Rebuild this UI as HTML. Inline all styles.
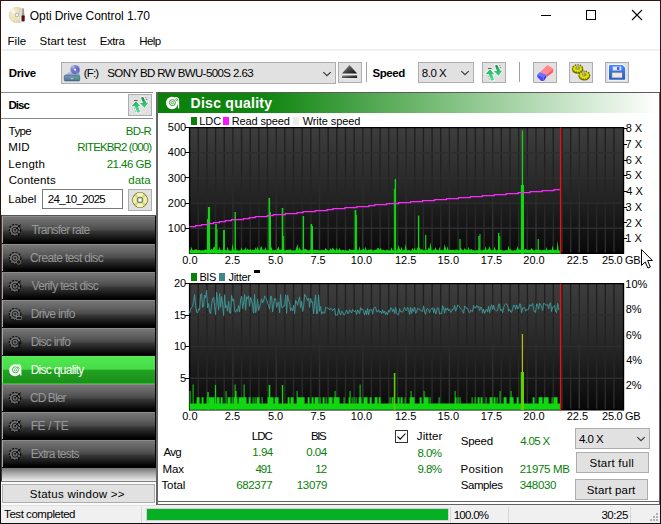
<!DOCTYPE html>
<html><head><meta charset="utf-8">
<style>
*{box-sizing:border-box;margin:0;padding:0}
html,body{width:661px;height:524px;overflow:hidden;background:#fff}
body{position:relative;font-family:"Liberation Sans",sans-serif;font-size:12px;color:#000}
.a{position:absolute}
.t{position:absolute;white-space:nowrap;line-height:16px}
.ax{position:absolute;white-space:nowrap;font-size:11px;line-height:12px;color:#000}
.tk{position:absolute;height:1px;background:#000}
.btn{position:absolute;background:#e1e1e1;border:1px solid #adadad}
.nav{position:absolute;left:2px;width:153px;height:27px;background:linear-gradient(#767676 0%,#606060 28%,#4a4a4a 49%,#363636 56%,#1c1c1c 76%,#070707 92%,#000 100%);border-left:1px solid #a8a8a8;border-top:1px solid #8c8c8c}
.nav.on{height:28px;border-bottom:1px solid #2cbc2c;background:linear-gradient(#50e650 0%,#46de46 46%,#22a222 52%,#1b8e1b 100%);border-left:1px solid #7cf07c;border-top:1px solid #58e858}
</style></head><body>
<!-- window frame -->
<div class="a" style="left:0;top:0;width:661px;height:1px;background:#33170f;z-index:50"></div>
<div class="a" style="left:0;top:523px;width:661px;height:1px;background:#101010;z-index:50"></div>
<div class="a" style="left:0;top:0;width:1px;height:524px;background:linear-gradient(#33170f,#2a1510 40%,#101010 80%);z-index:50"></div>
<div class="a" style="left:660px;top:0;width:1px;height:524px;background:linear-gradient(#33170f,#2a1510 40%,#101010 80%);z-index:50"></div>

<!-- title bar -->
<svg class="a" style="left:8px;top:6px" width="18" height="18" viewBox="0 0 18 18">
<defs><radialGradient id="dg" cx="0.4" cy="0.45" r="0.6"><stop offset="0" stop-color="#f8f4dc"/><stop offset="1" stop-color="#e0d6a0"/></radialGradient></defs>
<circle cx="8.9" cy="9" r="7.8" fill="url(#dg)" stroke="#d6cd9c" stroke-width="0.5"/>
<path d="M8.9 9 L1.8 5.4 A7.8 7.8 0 0 1 5.6 2Z" fill="#fbf8e8" opacity="0.9"/>
<path d="M8.9 9 L16 12.6 A7.8 7.8 0 0 1 12.2 16Z" fill="#fbf8e8" opacity="0.9"/>
<path d="M8.9 9 L4.4 15.4 A7.8 7.8 0 0 1 2 12.8Z" fill="#ece3b6"/>
<path d="M8.9 9 L13.4 2.6 A7.8 7.8 0 0 1 15.8 5.2Z" fill="#ece3b6"/>
<circle cx="8.9" cy="9" r="2.4" fill="#c0c0c0"/><circle cx="8.9" cy="9" r="1.1" fill="#fff"/>
<path d="M11.7 2.2 L12.8 2 L13.3 16.4 L11.5 16.6Z" fill="#f2f2f2" stroke="#b4b4b4" stroke-width="0.45"/>
<rect x="14.3" y="2.4" width="1.5" height="7" fill="#8c8c8c"/>
<rect x="13.6" y="9.2" width="3.1" height="6.4" rx="1" fill="#581010"/>
</svg>
<div class="a" style="left:541px;top:15px;width:10px;height:1px;background:#000"></div>
<div class="a" style="left:586px;top:10px;width:10px;height:10px;border:1px solid #000"></div>
<svg class="a" style="left:631px;top:9px" width="12" height="12" viewBox="0 0 12 12"><path d="M1 1 L11 11 M11 1 L1 11" stroke="#000" stroke-width="1.1" fill="none"/></svg>

<!-- menu separator -->
<div class="a" style="left:1px;top:49px;width:659px;height:2px;background:#f0f0f0"></div>

<!-- toolbar -->
<div class="btn" style="left:61px;top:62px;width:275px;height:22px"></div>
<svg class="a" style="left:63px;top:63px" width="19" height="20" viewBox="0 0 19 20">
<defs><linearGradient id="dv" x1="0" y1="0" x2="0" y2="1"><stop offset="0" stop-color="#7f9dbd"/><stop offset="1" stop-color="#4f7196"/></linearGradient>
<linearGradient id="dd" x1="0" y1="0" x2="1" y2="1"><stop offset="0" stop-color="#8c94d8"/><stop offset="1" stop-color="#4c56ae"/></linearGradient></defs>
<path d="M5.5 9.6 L16.5 9.6 L16.5 12.4 L1.3 12.4Z" fill="#9db4cc"/>
<circle cx="12.1" cy="6.8" r="4.9" fill="url(#dd)" stroke="#c8ccec" stroke-width="0.5"/>
<path d="M12.1 6.8 L8.2 4.5 A4.9 4.9 0 0 1 11 2.1Z" fill="#b0b6ea" opacity="0.8"/>
<path d="M12.1 6.8 L16 9.2 A4.9 4.9 0 0 1 13.2 11.6Z" fill="#8088d0" opacity="0.8"/>
<circle cx="12.1" cy="6.8" r="1" fill="#fff"/>
<rect x="1.3" y="12.3" width="15.4" height="5.6" rx="1" fill="url(#dv)" stroke="#3e5e82" stroke-width="0.7"/>
<rect x="12.6" y="13.7" width="2.4" height="2.4" fill="#1fc43a"/>
<rect x="7.6" y="15.2" width="2.8" height="0.9" fill="#c8d4e4"/>
</svg>
<svg class="a" style="left:322px;top:71px" width="10" height="6" viewBox="0 0 10 6"><path d="M1.3 1.1 L5 4.7 L8.7 1.1" stroke="#3c3c3c" stroke-width="1.25" fill="none"/></svg>
<div class="btn" style="left:338px;top:62px;width:24px;height:21px"></div>
<svg class="a" style="left:340px;top:63px" width="20" height="19" viewBox="0 0 20 19">
<defs><linearGradient id="ej" x1="0" y1="0" x2="1" y2="1"><stop offset="0" stop-color="#9a9a9a"/><stop offset="0.5" stop-color="#4a4a4a"/><stop offset="1" stop-color="#080808"/></linearGradient></defs>
<path d="M2 11.6 L17.1 11.6 L17.1 16.1 L2 16.1Z" fill="#fff"/>
<path d="M9.5 1.9 L17.1 10.6 L2 10.6Z" fill="url(#ej)"/>
<rect x="2" y="12.3" width="15.1" height="2.8" fill="url(#ej)"/>
</svg>
<div class="a" style="left:366px;top:62px;width:1px;height:20px;background:#a0a0a0"></div>
<div class="btn" style="left:418px;top:62px;width:56px;height:21px"></div>
<svg class="a" style="left:460px;top:70px" width="10" height="6" viewBox="0 0 10 6"><path d="M1.3 1.1 L5 4.7 L8.7 1.1" stroke="#3c3c3c" stroke-width="1.25" fill="none"/></svg>
<div class="btn" style="left:482px;top:62px;width:24px;height:21px"></div>
<svg class="a" style="left:482px;top:62px" width="24" height="22" viewBox="0 0 24 22">
<defs><linearGradient id="rua" x1="0" y1="0" x2="0.4" y2="1"><stop offset="0" stop-color="#1ea658"/><stop offset="1" stop-color="#4ade90"/></linearGradient>
<linearGradient id="rda" x1="0" y1="0" x2="0.3" y2="1"><stop offset="0" stop-color="#176e3e"/><stop offset="0.5" stop-color="#27b264"/><stop offset="1" stop-color="#3ed080"/></linearGradient></defs>
<path d="M8 7.3 L12.5 12.3 L9.9 12.3 L12.3 18 L9.2 18.7 L6.9 12.3 L3.5 12.3Z" fill="#fff" stroke="#fff" stroke-width="1.6" stroke-linejoin="round" opacity="0.9"/>
<path d="M13 3.4 L15.2 3 L18.3 8.8 L20.3 8.6 L16.5 13.9 L12 9 L15 8.9Z" fill="#fff" stroke="#fff" stroke-width="1.6" stroke-linejoin="round" opacity="0.9"/>
<path d="M8 7.3 L12.5 12.3 L9.9 12.3 L12.3 18 L9.2 18.7 L6.9 12.3 L3.5 12.3Z" fill="url(#rua)"/>
<path d="M13 3.4 L15.2 3 L18.3 8.8 L20.3 8.6 L16.5 13.9 L12 9 L15 8.9Z" fill="url(#rda)"/>
<rect x="6" y="6" width="3.6" height="0.9" fill="#333" opacity="0.85"/>
<path d="M17.6 3.4 L18.9 6.2" stroke="#333" stroke-width="0.8" stroke-dasharray="1 0.8" opacity="0.8"/>
<path d="M6.3 13.8 L8 18.6" stroke="#333" stroke-width="0.7" stroke-dasharray="0.9 2.2" opacity="0.7"/>
</svg>
<div class="a" style="left:519px;top:62px;width:1px;height:20px;background:#a0a0a0"></div>
<div class="btn" style="left:533px;top:62px;width:24px;height:21px"></div>
<svg class="a" style="left:528px;top:58px" width="40" height="30" viewBox="0 0 40 30">
<path d="M19.4 6.2 L26 10.4 L25.6 14.6 L18.2 20 L15.8 23.4 L12.8 23.4 L8.6 19 L8.6 16.2 L11.8 13.8Z" fill="#fff" opacity="0.85"/>
<path d="M19.4 6.7 L25.5 10.6 L18.4 16.4 L11.9 13.9Z" fill="#ff8a90"/>
<path d="M25.5 10.6 L25.2 14.2 L18.2 19.6 L18.4 16.4Z" fill="#ff5a62"/>
<path d="M11.9 13.9 L18.4 16.4 L15.6 19.6 L9.2 16.4Z" fill="#7070ff"/>
<path d="M18.4 16.4 L18.2 19.6 L15.8 22.9 L15.6 19.6Z" fill="#3838f0"/>
<path d="M9.2 16.4 L15.6 19.6 L15.8 22.9 L13 22.9 L9.2 18.9Z" fill="#4848ff"/>
</svg>
<div class="btn" style="left:569px;top:62px;width:24px;height:21px"></div>
<svg class="a" style="left:564px;top:58px" width="40" height="30" viewBox="0 0 40 30">
<g>
<ellipse cx="13.6" cy="11.4" rx="5.6" ry="4.3" fill="#6e6e00"/>
<ellipse cx="13.6" cy="10.6" rx="5" ry="3.8" fill="#e4e400" stroke="#6c6c00" stroke-width="1.5" stroke-dasharray="1.3 1.2"/>
<ellipse cx="13.6" cy="10.2" rx="2.6" ry="1.7" fill="#a8a800"/>
<rect x="12.7" y="6.4" width="2" height="5.2" fill="#8c8c8c"/><rect x="13.3" y="6.4" width="0.8" height="5.2" fill="#c4c4c4"/>
<ellipse cx="20.3" cy="18" rx="5.8" ry="4.6" fill="#6e6e00"/>
<ellipse cx="20.3" cy="17.2" rx="5.2" ry="4" fill="#e4e400" stroke="#6c6c00" stroke-width="1.5" stroke-dasharray="1.3 1.2"/>
<ellipse cx="20.3" cy="16.8" rx="2.6" ry="1.8" fill="#a8a800"/>
<rect x="18.7" y="13.2" width="2" height="5.2" fill="#8c8c8c"/><rect x="19.3" y="13.2" width="0.8" height="5.2" fill="#c4c4c4"/>
</g>
</svg>
<div class="btn" style="left:605px;top:62px;width:24px;height:21px"></div>
<svg class="a" style="left:600px;top:58px" width="40" height="30" viewBox="0 0 40 30">
<defs><linearGradient id="fl" x1="0" y1="0" x2="0" y2="1"><stop offset="0" stop-color="#4a86ff"/><stop offset="1" stop-color="#1a5ae8"/></linearGradient></defs>
<path d="M8.3 6.2 H22.8 L26 9.4 V22.6 H8.3Z" fill="#fff"/>
<path d="M9.8 7 H22.4 L25.2 9.8 V21 Q25.2 21.8 24.4 21.8 H9.8 Q9 21.8 9 21 V7.8 Q9 7 9.8 7Z" fill="url(#fl)"/>
<rect x="12.7" y="8.5" width="8.6" height="4" fill="#dfe6fa"/>
<rect x="17" y="9.1" width="2.4" height="2.8" fill="#2a62f0"/>
<rect x="11.8" y="14.2" width="10.6" height="5.8" fill="#e8e8e8" stroke="#6a6a6a" stroke-width="0.8"/>
</svg>
<div class="a" style="left:1px;top:92px;width:152px;height:1px;background:#8a8a8a"></div><div class="a" style="left:156px;top:92px;width:504px;height:1px;background:#5c5c5c"></div>

<!-- left panel -->
<div class="btn" style="left:128px;top:94px;width:24px;height:22px"></div>
<svg class="a" style="left:128px;top:94px" width="24" height="22" viewBox="0 0 24 22">
<defs><linearGradient id="rub" x1="0" y1="0" x2="0.4" y2="1"><stop offset="0" stop-color="#1ea658"/><stop offset="1" stop-color="#4ade90"/></linearGradient>
<linearGradient id="rdb" x1="0" y1="0" x2="0.3" y2="1"><stop offset="0" stop-color="#176e3e"/><stop offset="0.5" stop-color="#27b264"/><stop offset="1" stop-color="#3ed080"/></linearGradient></defs>
<path d="M8 7.3 L12.5 12.3 L9.9 12.3 L12.3 18 L9.2 18.7 L6.9 12.3 L3.5 12.3Z" fill="#fff" stroke="#fff" stroke-width="1.6" stroke-linejoin="round" opacity="0.9"/>
<path d="M13 3.4 L15.2 3 L18.3 8.8 L20.3 8.6 L16.5 13.9 L12 9 L15 8.9Z" fill="#fff" stroke="#fff" stroke-width="1.6" stroke-linejoin="round" opacity="0.9"/>
<path d="M8 7.3 L12.5 12.3 L9.9 12.3 L12.3 18 L9.2 18.7 L6.9 12.3 L3.5 12.3Z" fill="url(#rub)"/>
<path d="M13 3.4 L15.2 3 L18.3 8.8 L20.3 8.6 L16.5 13.9 L12 9 L15 8.9Z" fill="url(#rdb)"/>
<rect x="6" y="6" width="3.6" height="0.9" fill="#333" opacity="0.85"/>
<path d="M17.6 3.4 L18.9 6.2" stroke="#333" stroke-width="0.8" stroke-dasharray="1 0.8" opacity="0.8"/>
<path d="M6.3 13.8 L8 18.6" stroke="#333" stroke-width="0.7" stroke-dasharray="0.9 2.2" opacity="0.7"/>
</svg>
<div class="a" style="left:1px;top:118px;width:152px;height:1px;background:#8a8a8a"></div>
<div class="a" style="left:42px;top:189px;width:81px;height:20px;border:1px solid #7a7a7a;background:#fff"></div>
<div class="btn" style="left:128px;top:189px;width:24px;height:22px"></div>
<svg class="a" style="left:131px;top:191px" width="18" height="18" viewBox="0 0 18 18">
<circle cx="9" cy="9" r="7.5" fill="#e6e68c" stroke="#55552a" stroke-width="0.9"/>
<path d="M9 9 L5.6 2.4 A7.4 7.4 0 0 1 12.4 2.4Z M9 9 L12.4 15.6 A7.4 7.4 0 0 1 5.6 15.6Z" fill="#f8f8c0" opacity="0.9"/>
<path d="M9 9 L2.4 5.6 A7.4 7.4 0 0 0 2.4 12.4Z M9 9 L15.6 12.4 A7.4 7.4 0 0 0 15.6 5.6Z" fill="#f4f4b0" opacity="0.75"/>
<path d="M9 9 L3.2 3.9 A7.4 7.4 0 0 1 4.6 2.9Z M9 9 L14.8 14.1 A7.4 7.4 0 0 1 13.4 15.1Z M9 9 L14.8 3.9 A7.4 7.4 0 0 0 13.4 2.9Z M9 9 L3.2 14.1 A7.4 7.4 0 0 0 4.6 15.1Z" fill="#c8c860" opacity="0.7"/>
<circle cx="9" cy="9" r="2.9" fill="#c4d4c0" stroke="#60604a" stroke-width="0.9"/><circle cx="9" cy="9" r="1.3" fill="#fff"/></svg>

<!-- nav -->
<div class="a" style="left:1px;top:215px;width:155px;height:253px;background:#050505"></div><div class="a" style="left:1px;top:215px;width:155px;height:1px;background:#555"></div>
<div class="nav" style="top:216px"></div><svg class="a" style="left:2px;top:216px" width="30" height="28" viewBox="0 0 30 28">
<circle cx="13.1" cy="14.2" r="5.7" fill="#808080" fill-opacity="0.7" stroke="#0a0a0a" stroke-width="1.2" stroke-dasharray="2.2 1.1"/>
<circle cx="13.1" cy="14.2" r="3" fill="none" stroke="#151515" stroke-width="0.9"/>
<circle cx="13.1" cy="14.2" r="1.1" fill="#2a2a2a"/>
<g transform="translate(-2,0)"><path d="M15.2 13.8 L20.8 8.6 M18.4 9.4 L20 11.4 M17.6 12.6 L19.6 15 M17.8 16.4 L18.8 19.8" stroke="#0a0a0a" stroke-width="1" fill="none"/></g>
</svg><div class="nav" style="top:244px"></div><svg class="a" style="left:2px;top:244px" width="30" height="28" viewBox="0 0 30 28">
<circle cx="13.1" cy="14.2" r="5.7" fill="#808080" fill-opacity="0.7" stroke="#0a0a0a" stroke-width="1.2" stroke-dasharray="2.2 1.1"/>
<circle cx="13.1" cy="14.2" r="3" fill="none" stroke="#151515" stroke-width="0.9"/>
<circle cx="13.1" cy="14.2" r="1.1" fill="#2a2a2a"/>
<g transform="translate(-2,0)"><circle cx="18.6" cy="18" r="2.2" fill="#1a1a1a" stroke="#aaa" stroke-width="0.5"/></g>
</svg><div class="nav" style="top:272px"></div><svg class="a" style="left:2px;top:272px" width="30" height="28" viewBox="0 0 30 28">
<circle cx="13.1" cy="14.2" r="5.7" fill="#808080" fill-opacity="0.7" stroke="#0a0a0a" stroke-width="1.2" stroke-dasharray="2.2 1.1"/>
<circle cx="13.1" cy="14.2" r="3" fill="none" stroke="#151515" stroke-width="0.9"/>
<circle cx="13.1" cy="14.2" r="1.1" fill="#2a2a2a"/>
<g transform="translate(-2,0)"><path d="M15.2 13.8 L20.8 8.6 M18.4 9.4 L20 11.4 M17.6 12.6 L19.6 15 M17.8 16.4 L18.8 19.8" stroke="#0a0a0a" stroke-width="1" fill="none"/></g>
</svg><div class="nav" style="top:300px"></div><svg class="a" style="left:2px;top:300px" width="30" height="28" viewBox="0 0 30 28">
<circle cx="13.1" cy="14.2" r="5.7" fill="#808080" fill-opacity="0.7" stroke="#0a0a0a" stroke-width="1.2" stroke-dasharray="2.2 1.1"/>
<circle cx="13.1" cy="14.2" r="3" fill="none" stroke="#151515" stroke-width="0.9"/>
<circle cx="13.1" cy="14.2" r="1.1" fill="#2a2a2a"/>
<g transform="translate(-2,0)"><rect x="16.4" y="16.6" width="5" height="3" fill="#1a1a1a" stroke="#aaa" stroke-width="0.5"/></g>
</svg><div class="nav" style="top:328px"></div><svg class="a" style="left:2px;top:328px" width="30" height="28" viewBox="0 0 30 28">
<circle cx="13.1" cy="14.2" r="5.7" fill="#808080" fill-opacity="0.7" stroke="#0a0a0a" stroke-width="1.2" stroke-dasharray="2.2 1.1"/>
<circle cx="13.1" cy="14.2" r="3" fill="none" stroke="#151515" stroke-width="0.9"/>
<circle cx="13.1" cy="14.2" r="1.1" fill="#2a2a2a"/>
<g transform="translate(-2,0)"><rect x="18.4" y="13.4" width="1.6" height="6" fill="#111"/><rect x="17" y="19" width="4" height="1" fill="#111"/></g>
</svg><div class="nav on" style="top:356px"></div><svg class="a" style="left:2px;top:356px" width="30" height="28" viewBox="0 0 30 28">
<circle cx="13.1" cy="14.2" r="6" fill="#fff"/>
<circle cx="13.4" cy="13.799999999999999" r="3" fill="none" stroke="#2cb02c" stroke-width="0.9"/>
<circle cx="13.4" cy="13.799999999999999" r="1.2" fill="none" stroke="#2cb02c" stroke-width="0.7"/>
<g transform="translate(-2,0)"><path d="M17.2 9.6 Q19.4 8 20.6 10.2 L20.9 19.4" stroke="#fff" stroke-width="1.2" fill="none"/>
<path d="M17.6 10.4 L19.6 12.8" stroke="#2cb02c" stroke-width="0.7"/></g>
</svg><div class="nav" style="top:384px"></div><svg class="a" style="left:2px;top:384px" width="30" height="28" viewBox="0 0 30 28">
<circle cx="13.1" cy="14.2" r="5.7" fill="#808080" fill-opacity="0.7" stroke="#0a0a0a" stroke-width="1.2" stroke-dasharray="2.2 1.1"/>
<circle cx="13.1" cy="14.2" r="3" fill="none" stroke="#151515" stroke-width="0.9"/>
<circle cx="13.1" cy="14.2" r="1.1" fill="#2a2a2a"/>
<g transform="translate(-2,0)"><path d="M15.2 13.8 L20.8 8.6 M18.4 9.4 L20 11.4 M17.6 12.6 L19.6 15 M17.8 16.4 L18.8 19.8" stroke="#0a0a0a" stroke-width="1" fill="none"/></g>
</svg><div class="nav" style="top:412px"></div><svg class="a" style="left:2px;top:412px" width="30" height="28" viewBox="0 0 30 28">
<circle cx="13.1" cy="14.2" r="5.7" fill="#808080" fill-opacity="0.7" stroke="#0a0a0a" stroke-width="1.2" stroke-dasharray="2.2 1.1"/>
<circle cx="13.1" cy="14.2" r="3" fill="none" stroke="#151515" stroke-width="0.9"/>
<circle cx="13.1" cy="14.2" r="1.1" fill="#2a2a2a"/>
<g transform="translate(-2,0)"><path d="M15.2 13.8 L20.8 8.6 M18.4 9.4 L20 11.4 M17.6 12.6 L19.6 15 M17.8 16.4 L18.8 19.8" stroke="#0a0a0a" stroke-width="1" fill="none"/></g>
</svg><div class="nav" style="top:440px"></div><svg class="a" style="left:2px;top:440px" width="30" height="28" viewBox="0 0 30 28">
<circle cx="13.1" cy="14.2" r="5.7" fill="#808080" fill-opacity="0.7" stroke="#0a0a0a" stroke-width="1.2" stroke-dasharray="2.2 1.1"/>
<circle cx="13.1" cy="14.2" r="3" fill="none" stroke="#151515" stroke-width="0.9"/>
<circle cx="13.1" cy="14.2" r="1.1" fill="#2a2a2a"/>
<g transform="translate(-2,0)"><path d="M15.2 13.8 L20.8 8.6 M18.4 9.4 L20 11.4 M17.6 12.6 L19.6 15 M17.8 16.4 L18.8 19.8" stroke="#0a0a0a" stroke-width="1" fill="none"/></g>
</svg>
<div class="a" style="left:2px;top:468px;width:154px;height:13px;background:linear-gradient(#747474,#a8a8a8 40%,#ececec)"></div>
<div class="a" style="left:1px;top:215px;width:1px;height:266px;background:#3a3a3a"></div>
<div class="a" style="left:1px;top:481px;width:155px;height:1px;background:#7e7e7e"></div>
<div class="a" style="left:1px;top:482px;width:155px;height:23px;background:#fafafa"></div>
<div class="btn" style="left:2px;top:484px;width:153px;height:19px"></div>
<div class="a" style="left:156px;top:92px;width:2px;height:413px;background:#666"></div>

<!-- right panel header -->
<div class="a" style="left:158px;top:93px;width:501px;height:20px;background:linear-gradient(90deg,#0a800a 0%,#128612 22%,#80c080 58%,#ffffff 100%)"></div>
<svg class="a" style="left:165px;top:96px" width="16" height="14" viewBox="0 0 16 14"><ellipse cx="7" cy="7" rx="6" ry="6.2" fill="#fff"/><circle cx="7.4" cy="6.6" r="3" fill="none" stroke="#1e8c1e" stroke-width="0.9"/><circle cx="7.4" cy="6.6" r="1.2" fill="none" stroke="#1e8c1e" stroke-width="0.7"/><path d="M9.5 2.2 Q12 0.8 13.4 3.2 L13.6 12.6" stroke="#fff" stroke-width="1.3" fill="none"/><path d="M10.4 3.2 L12.4 5.4" stroke="#1e8c1e" stroke-width="0.7"/></svg>

<div class="a" style="left:191px;top:117px;width:6px;height:8px;background:#0a820a"></div>
<div class="a" style="left:223px;top:117px;width:6px;height:8px;background:#ff10ff"></div>
<div class="a" style="left:293px;top:117px;width:6px;height:8px;background:#ececec"></div>
<div class="a" style="left:191px;top:273px;width:6px;height:8px;background:#0a820a"></div>
<div class="a" style="left:219px;top:273px;width:6px;height:8px;background:#3f8888"></div>
<div class="a" style="left:254px;top:270px;width:6px;height:3px;background:#000"></div>

<svg id="charts" width="661" height="524" viewBox="0 0 661 524" style="position:absolute;left:0;top:0">
<defs>
<linearGradient id="cg" x1="0" y1="0" x2="0" y2="1"><stop offset="0" stop-color="#3e3e3e"/><stop offset="0.5" stop-color="#262626"/><stop offset="1" stop-color="#080808"/></linearGradient>
<linearGradient id="gmi" x1="0" y1="0" x2="0" y2="1"><stop offset="0" stop-color="#1f1f1f"/><stop offset="0.6" stop-color="#242424"/><stop offset="1" stop-color="#2d2d2d"/></linearGradient>
<linearGradient id="gma" x1="0" y1="0" x2="0" y2="1"><stop offset="0" stop-color="#212121"/><stop offset="0.6" stop-color="#2c2c2c"/><stop offset="1" stop-color="#3a3a3a"/></linearGradient>
</defs>
<rect x="189.0" y="127.0" width="435.0" height="127.0" fill="url(#cg)"/>
<rect x="197.56" y="127.5" width="1.4" height="126.0" fill="url(#gmi)"/><rect x="206.22" y="127.5" width="1.4" height="126.0" fill="url(#gmi)"/><rect x="214.88" y="127.5" width="1.4" height="126.0" fill="url(#gmi)"/><rect x="223.54" y="127.5" width="1.4" height="126.0" fill="url(#gmi)"/><rect x="232.20" y="127.5" width="1.4" height="126.0" fill="url(#gma)"/><rect x="240.86" y="127.5" width="1.4" height="126.0" fill="url(#gmi)"/><rect x="249.52" y="127.5" width="1.4" height="126.0" fill="url(#gmi)"/><rect x="258.18" y="127.5" width="1.4" height="126.0" fill="url(#gmi)"/><rect x="266.84" y="127.5" width="1.4" height="126.0" fill="url(#gmi)"/><rect x="275.50" y="127.5" width="1.4" height="126.0" fill="url(#gma)"/><rect x="284.16" y="127.5" width="1.4" height="126.0" fill="url(#gmi)"/><rect x="292.82" y="127.5" width="1.4" height="126.0" fill="url(#gmi)"/><rect x="301.48" y="127.5" width="1.4" height="126.0" fill="url(#gmi)"/><rect x="310.14" y="127.5" width="1.4" height="126.0" fill="url(#gmi)"/><rect x="318.80" y="127.5" width="1.4" height="126.0" fill="url(#gma)"/><rect x="327.46" y="127.5" width="1.4" height="126.0" fill="url(#gmi)"/><rect x="336.12" y="127.5" width="1.4" height="126.0" fill="url(#gmi)"/><rect x="344.78" y="127.5" width="1.4" height="126.0" fill="url(#gmi)"/><rect x="353.44" y="127.5" width="1.4" height="126.0" fill="url(#gmi)"/><rect x="362.10" y="127.5" width="1.4" height="126.0" fill="url(#gma)"/><rect x="370.76" y="127.5" width="1.4" height="126.0" fill="url(#gmi)"/><rect x="379.42" y="127.5" width="1.4" height="126.0" fill="url(#gmi)"/><rect x="388.08" y="127.5" width="1.4" height="126.0" fill="url(#gmi)"/><rect x="396.74" y="127.5" width="1.4" height="126.0" fill="url(#gmi)"/><rect x="405.40" y="127.5" width="1.4" height="126.0" fill="url(#gma)"/><rect x="414.06" y="127.5" width="1.4" height="126.0" fill="url(#gmi)"/><rect x="422.72" y="127.5" width="1.4" height="126.0" fill="url(#gmi)"/><rect x="431.38" y="127.5" width="1.4" height="126.0" fill="url(#gmi)"/><rect x="440.04" y="127.5" width="1.4" height="126.0" fill="url(#gmi)"/><rect x="448.70" y="127.5" width="1.4" height="126.0" fill="url(#gma)"/><rect x="457.36" y="127.5" width="1.4" height="126.0" fill="url(#gmi)"/><rect x="466.02" y="127.5" width="1.4" height="126.0" fill="url(#gmi)"/><rect x="474.68" y="127.5" width="1.4" height="126.0" fill="url(#gmi)"/><rect x="483.34" y="127.5" width="1.4" height="126.0" fill="url(#gmi)"/><rect x="492.00" y="127.5" width="1.4" height="126.0" fill="url(#gma)"/><rect x="500.66" y="127.5" width="1.4" height="126.0" fill="url(#gmi)"/><rect x="509.32" y="127.5" width="1.4" height="126.0" fill="url(#gmi)"/><rect x="517.98" y="127.5" width="1.4" height="126.0" fill="url(#gmi)"/><rect x="526.64" y="127.5" width="1.4" height="126.0" fill="url(#gmi)"/><rect x="535.30" y="127.5" width="1.4" height="126.0" fill="url(#gma)"/><rect x="543.96" y="127.5" width="1.4" height="126.0" fill="url(#gmi)"/><rect x="552.62" y="127.5" width="1.4" height="126.0" fill="url(#gmi)"/><rect x="561.28" y="127.5" width="1.4" height="126.0" fill="url(#gmi)"/><rect x="569.94" y="127.5" width="1.4" height="126.0" fill="url(#gmi)"/><rect x="578.60" y="127.5" width="1.4" height="126.0" fill="url(#gma)"/><rect x="587.26" y="127.5" width="1.4" height="126.0" fill="url(#gmi)"/><rect x="595.92" y="127.5" width="1.4" height="126.0" fill="url(#gmi)"/><rect x="604.58" y="127.5" width="1.4" height="126.0" fill="url(#gmi)"/><rect x="613.24" y="127.5" width="1.4" height="126.0" fill="url(#gmi)"/><line x1="189.0" y1="152.70" x2="624.0" y2="152.70" stroke="#2e2e2e" stroke-width="1.4"/><line x1="189.0" y1="177.90" x2="624.0" y2="177.90" stroke="#2e2e2e" stroke-width="1.4"/><line x1="189.0" y1="203.10" x2="624.0" y2="203.10" stroke="#2e2e2e" stroke-width="1.4"/><line x1="189.0" y1="228.30" x2="624.0" y2="228.30" stroke="#2e2e2e" stroke-width="1.4"/>
<path d="M189.6 254.0 V127.6 H623.5 V254.0" fill="none" stroke="#000" stroke-width="1.4"/>
<rect x="189.0" y="252.5" width="435.0" height="1.5" fill="#000"/>
<polygon points="189.6,253.5 189.6,250.4 190.6,250.1 191.6,246.6 192.6,250.5 193.6,250.0 194.6,249.7 195.6,249.6 196.6,249.3 197.6,250.3 198.6,250.0 199.6,250.1 200.6,250.4 201.6,250.3 202.6,250.3 203.6,250.4 204.6,249.7 205.6,249.6 206.6,249.8 207.6,250.6 208.6,248.0 209.6,249.9 210.6,250.1 211.6,248.5 212.6,249.9 213.6,246.9 214.6,246.2 215.6,250.5 216.6,250.0 217.6,249.7 218.6,250.1 219.6,246.7 220.6,250.2 221.6,249.9 222.6,250.4 223.6,247.0 224.6,250.0 225.6,250.1 226.6,250.5 227.6,246.7 228.6,250.2 229.6,250.5 230.6,250.4 231.6,250.6 232.6,243.2 233.6,250.5 234.6,250.2 235.6,246.1 236.6,250.5 237.6,250.3 238.6,250.6 239.6,250.5 240.6,250.1 241.6,247.5 242.6,250.4 243.6,249.8 244.6,249.8 245.6,247.0 246.6,250.4 247.6,248.3 248.6,249.9 249.6,249.7 250.6,249.0 251.6,250.4 252.6,249.7 253.6,249.9 254.6,249.9 255.6,247.2 256.6,249.8 257.6,246.2 258.6,249.7 259.6,250.5 260.6,247.0 261.6,246.2 262.6,250.1 263.6,249.6 264.6,249.7 265.6,246.9 266.6,250.3 267.6,250.3 268.6,249.7 269.6,250.0 270.6,249.7 271.6,246.6 272.6,250.6 273.6,250.1 274.6,250.3 275.6,249.8 276.6,250.4 277.6,248.3 278.6,246.5 279.6,250.1 280.6,250.1 281.6,249.7 282.6,246.4 283.6,249.7 284.6,250.5 285.6,250.4 286.6,249.8 287.6,249.9 288.6,249.7 289.6,249.6 290.6,249.6 291.6,250.2 292.6,250.4 293.6,250.6 294.6,250.6 295.6,250.1 296.6,247.1 297.6,244.1 298.6,250.5 299.6,246.9 300.6,249.7 301.6,250.5 302.6,250.2 303.6,247.7 304.6,249.7 305.6,248.6 306.6,249.7 307.6,250.1 308.6,250.4 309.6,250.3 310.6,249.3 311.6,248.2 312.6,249.9 313.6,250.1 314.6,249.8 315.6,249.8 316.6,249.9 317.6,249.8 318.6,250.2 319.6,250.5 320.6,250.3 321.6,249.8 322.6,250.3 323.6,250.1 324.6,250.3 325.6,248.1 326.6,249.2 327.6,250.2 328.6,250.4 329.6,250.3 330.6,248.1 331.6,250.0 332.6,247.6 333.6,248.8 334.6,249.9 335.6,250.6 336.6,247.8 337.6,250.0 338.6,249.8 339.6,248.0 340.6,249.9 341.6,250.5 342.6,249.8 343.6,250.0 344.6,250.6 345.6,250.1 346.6,250.5 347.6,250.5 348.6,250.4 349.6,248.4 350.6,249.9 351.6,250.0 352.6,250.3 353.6,249.5 354.6,249.9 355.6,250.3 356.6,250.1 357.6,249.7 358.6,250.5 359.6,246.2 360.6,250.4 361.6,250.0 362.6,249.6 363.6,248.3 364.6,250.4 365.6,246.6 366.6,250.3 367.6,250.3 368.6,249.8 369.6,249.7 370.6,249.3 371.6,249.6 372.6,250.2 373.6,250.5 374.6,249.7 375.6,250.1 376.6,249.6 377.6,247.8 378.6,248.1 379.6,249.9 380.6,247.7 381.6,249.7 382.6,250.3 383.6,249.6 384.6,250.3 385.6,250.4 386.6,249.7 387.6,249.7 388.6,250.5 389.6,250.3 390.6,250.3 391.6,247.2 392.6,250.1 393.6,250.5 394.6,250.0 395.6,249.7 396.6,250.4 397.6,249.6 398.6,244.8 399.6,248.5 400.6,250.2 401.6,246.8 402.6,250.5 403.6,249.9 404.6,250.0 405.6,243.8 406.6,249.7 407.6,250.5 408.6,249.9 409.6,250.1 410.6,250.4 411.6,250.3 412.6,247.7 413.6,250.4 414.6,247.4 415.6,250.1 416.6,250.3 417.6,246.9 418.6,249.9 419.6,247.3 420.6,249.6 421.6,249.6 422.6,249.3 423.6,250.4 424.6,249.9 425.6,250.2 426.6,250.0 427.6,250.2 428.6,247.3 429.6,249.1 430.6,241.9 431.6,250.2 432.6,250.6 433.6,249.6 434.6,249.7 435.6,246.9 436.6,250.1 437.6,249.7 438.6,250.5 439.6,247.1 440.6,250.5 441.6,249.9 442.6,250.3 443.6,250.3 444.6,244.3 445.6,247.7 446.6,250.4 447.6,246.3 448.6,250.2 449.6,249.8 450.6,249.8 451.6,250.3 452.6,249.8 453.6,249.8 454.6,250.6 455.6,249.6 456.6,249.4 457.6,250.1 458.6,250.4 459.6,249.9 460.6,247.6 461.6,249.3 462.6,249.9 463.6,250.4 464.6,248.0 465.6,249.6 466.6,249.8 467.6,250.1 468.6,246.8 469.6,250.3 470.6,249.6 471.6,248.9 472.6,250.3 473.6,250.1 474.6,250.4 475.6,250.4 476.6,249.9 477.6,250.3 478.6,250.3 479.6,248.1 480.6,250.2 481.6,250.5 482.6,250.2 483.6,249.6 484.6,250.2 485.6,246.1 486.6,249.9 487.6,249.7 488.6,248.8 489.6,246.0 490.6,249.7 491.6,250.2 492.6,250.3 493.6,250.1 494.6,246.2 495.6,249.7 496.6,250.5 497.6,249.7 498.6,249.9 499.6,250.2 500.6,249.8 501.6,250.1 502.6,250.4 503.6,250.4 504.6,250.4 505.6,250.0 506.6,250.3 507.6,250.2 508.6,245.2 509.6,250.4 510.6,248.5 511.6,250.5 512.6,250.5 513.6,250.6 514.6,249.9 515.6,250.5 516.6,249.6 517.6,246.1 518.6,249.7 519.6,249.6 520.6,249.8 521.6,250.2 522.6,249.7 523.6,250.0 524.6,249.7 525.6,248.8 526.6,249.7 527.6,249.8 528.6,250.1 529.6,249.7 530.6,249.7 531.6,247.8 532.6,249.4 533.6,250.2 534.6,250.4 535.6,249.8 536.6,249.6 537.6,250.0 538.6,250.0 539.6,249.7 540.6,249.9 541.6,250.5 542.6,250.0 543.6,250.0 544.6,249.7 545.6,250.5 546.6,247.1 547.6,250.6 548.6,250.2 549.6,249.7 550.6,249.7 551.6,250.2 552.6,245.4 553.6,250.0 554.6,250.1 555.6,249.8 556.6,250.6 557.6,240.6 558.6,250.1 559.6,250.4 560.6,253.5" fill="#12d612"/><rect x="207.9" y="207" width="2.2" height="46.5" fill="#12d612"/><rect x="207.0" y="219" width="1.2" height="34.5" fill="#12d612"/><rect x="215.2" y="224" width="1.6" height="29.5" fill="#12d612"/><rect x="216.5" y="229" width="1" height="24.5" fill="#12d612"/><rect x="223.1" y="230" width="1.8" height="23.5" fill="#12d612"/><rect x="234.5" y="212" width="1.4" height="41.5" fill="#12d612"/><rect x="268.5" y="198" width="1.6" height="55.5" fill="#12d612"/><rect x="270.0" y="212" width="1" height="41.5" fill="#12d612"/><rect x="281.7" y="208" width="1.6" height="45.5" fill="#12d612"/><rect x="283.1" y="236" width="1" height="17.5" fill="#12d612"/><rect x="302.7" y="216" width="1.4" height="37.5" fill="#12d612"/><rect x="310.6" y="224" width="1.6" height="29.5" fill="#12d612"/><rect x="312.0" y="226" width="1" height="27.5" fill="#12d612"/><rect x="354.7" y="210" width="1.6" height="43.5" fill="#12d612"/><rect x="356.1" y="215" width="1" height="38.5" fill="#12d612"/><rect x="394.7" y="179" width="1.4" height="74.5" fill="#12d612"/><rect x="393.8" y="189" width="1.0" height="64.5" fill="#12d612"/><rect x="417.9" y="215.5" width="1.4" height="38.0" fill="#12d612"/><rect x="425.1" y="235" width="1.2" height="18.5" fill="#12d612"/><rect x="459.4" y="239" width="1.2" height="14.5" fill="#12d612"/><rect x="478.3" y="236" width="1.4" height="17.5" fill="#12d612"/><rect x="479.5" y="234" width="1" height="19.5" fill="#12d612"/><rect x="498.0" y="233" width="1.4" height="20.5" fill="#12d612"/><rect x="499.3" y="236" width="1" height="17.5" fill="#12d612"/><rect x="521.8" y="130.5" width="1.3" height="123.0" fill="#12d612"/><rect x="520.8" y="185" width="3.2" height="68.5" fill="#12d612"/><rect x="537.6" y="239" width="1.2" height="14.5" fill="#12d612"/><polyline points="189.6,226.5 195.6,226.5 195.6,225.5 201.5,225.5 201.5,224.5 207.5,224.5 207.5,223.5 213.5,223.5 213.5,222.5 219.5,222.5 219.5,221.5 225.4,221.5 225.4,220.5 231.4,220.5 231.4,219.5 237.4,219.5 237.4,219.5 243.4,219.5 243.4,218.5 249.3,218.5 249.3,217.5 255.3,217.5 255.3,216.5 261.3,216.5 261.3,216.5 267.3,216.5 267.3,215.5 273.2,215.5 273.2,214.5 279.2,214.5 279.2,214.5 285.2,214.5 285.2,213.5 291.2,213.5 291.2,213.5 297.1,213.5 297.1,212.5 303.1,212.5 303.1,211.5 309.1,211.5 309.1,211.5 315.1,211.5 315.1,210.5 321.0,210.5 321.0,210.5 327.0,210.5 327.0,209.5 333.0,209.5 333.0,208.5 339.0,208.5 339.0,208.5 344.9,208.5 344.9,207.5 350.9,207.5 350.9,207.5 356.9,207.5 356.9,206.5 362.9,206.5 362.9,206.5 368.8,206.5 368.8,205.5 374.8,205.5 374.8,204.5 380.8,204.5 380.8,204.5 386.7,204.5 386.7,203.5 392.7,203.5 392.7,203.5 398.7,203.5 398.7,202.5 404.7,202.5 404.7,202.5 410.6,202.5 410.6,201.5 416.6,201.5 416.6,201.5 422.6,201.5 422.6,200.5 428.6,200.5 428.6,200.5 434.5,200.5 434.5,199.5 440.5,199.5 440.5,199.5 446.5,199.5 446.5,198.5 452.5,198.5 452.5,198.5 458.4,198.5 458.4,197.5 464.4,197.5 464.4,197.5 470.4,197.5 470.4,196.5 476.4,196.5 476.4,196.5 482.3,196.5 482.3,195.5 488.3,195.5 488.3,195.5 494.3,195.5 494.3,194.5 500.3,194.5 500.3,194.5 506.2,194.5 506.2,193.5 512.2,193.5 512.2,193.5 518.2,193.5 518.2,192.5 524.2,192.5 524.2,192.5 530.1,192.5 530.1,191.5 536.1,191.5 536.1,191.5 542.1,191.5 542.1,190.5 548.1,190.5 548.1,190.5 554.0,190.5 554.0,189.5 560.0,189.5 560.0,189.5" fill="none" stroke="#fa28fa" stroke-width="1.25"/>
<rect x="559.9" y="127.5" width="1.35" height="126.5" fill="#e81212"/>
<rect x="189.0" y="283.0" width="435.0" height="127.30000000000001" fill="url(#cg)"/>
<rect x="197.56" y="283.5" width="1.4" height="126.30000000000001" fill="url(#gmi)"/><rect x="206.22" y="283.5" width="1.4" height="126.30000000000001" fill="url(#gmi)"/><rect x="214.88" y="283.5" width="1.4" height="126.30000000000001" fill="url(#gmi)"/><rect x="223.54" y="283.5" width="1.4" height="126.30000000000001" fill="url(#gmi)"/><rect x="232.20" y="283.5" width="1.4" height="126.30000000000001" fill="url(#gma)"/><rect x="240.86" y="283.5" width="1.4" height="126.30000000000001" fill="url(#gmi)"/><rect x="249.52" y="283.5" width="1.4" height="126.30000000000001" fill="url(#gmi)"/><rect x="258.18" y="283.5" width="1.4" height="126.30000000000001" fill="url(#gmi)"/><rect x="266.84" y="283.5" width="1.4" height="126.30000000000001" fill="url(#gmi)"/><rect x="275.50" y="283.5" width="1.4" height="126.30000000000001" fill="url(#gma)"/><rect x="284.16" y="283.5" width="1.4" height="126.30000000000001" fill="url(#gmi)"/><rect x="292.82" y="283.5" width="1.4" height="126.30000000000001" fill="url(#gmi)"/><rect x="301.48" y="283.5" width="1.4" height="126.30000000000001" fill="url(#gmi)"/><rect x="310.14" y="283.5" width="1.4" height="126.30000000000001" fill="url(#gmi)"/><rect x="318.80" y="283.5" width="1.4" height="126.30000000000001" fill="url(#gma)"/><rect x="327.46" y="283.5" width="1.4" height="126.30000000000001" fill="url(#gmi)"/><rect x="336.12" y="283.5" width="1.4" height="126.30000000000001" fill="url(#gmi)"/><rect x="344.78" y="283.5" width="1.4" height="126.30000000000001" fill="url(#gmi)"/><rect x="353.44" y="283.5" width="1.4" height="126.30000000000001" fill="url(#gmi)"/><rect x="362.10" y="283.5" width="1.4" height="126.30000000000001" fill="url(#gma)"/><rect x="370.76" y="283.5" width="1.4" height="126.30000000000001" fill="url(#gmi)"/><rect x="379.42" y="283.5" width="1.4" height="126.30000000000001" fill="url(#gmi)"/><rect x="388.08" y="283.5" width="1.4" height="126.30000000000001" fill="url(#gmi)"/><rect x="396.74" y="283.5" width="1.4" height="126.30000000000001" fill="url(#gmi)"/><rect x="405.40" y="283.5" width="1.4" height="126.30000000000001" fill="url(#gma)"/><rect x="414.06" y="283.5" width="1.4" height="126.30000000000001" fill="url(#gmi)"/><rect x="422.72" y="283.5" width="1.4" height="126.30000000000001" fill="url(#gmi)"/><rect x="431.38" y="283.5" width="1.4" height="126.30000000000001" fill="url(#gmi)"/><rect x="440.04" y="283.5" width="1.4" height="126.30000000000001" fill="url(#gmi)"/><rect x="448.70" y="283.5" width="1.4" height="126.30000000000001" fill="url(#gma)"/><rect x="457.36" y="283.5" width="1.4" height="126.30000000000001" fill="url(#gmi)"/><rect x="466.02" y="283.5" width="1.4" height="126.30000000000001" fill="url(#gmi)"/><rect x="474.68" y="283.5" width="1.4" height="126.30000000000001" fill="url(#gmi)"/><rect x="483.34" y="283.5" width="1.4" height="126.30000000000001" fill="url(#gmi)"/><rect x="492.00" y="283.5" width="1.4" height="126.30000000000001" fill="url(#gma)"/><rect x="500.66" y="283.5" width="1.4" height="126.30000000000001" fill="url(#gmi)"/><rect x="509.32" y="283.5" width="1.4" height="126.30000000000001" fill="url(#gmi)"/><rect x="517.98" y="283.5" width="1.4" height="126.30000000000001" fill="url(#gmi)"/><rect x="526.64" y="283.5" width="1.4" height="126.30000000000001" fill="url(#gmi)"/><rect x="535.30" y="283.5" width="1.4" height="126.30000000000001" fill="url(#gma)"/><rect x="543.96" y="283.5" width="1.4" height="126.30000000000001" fill="url(#gmi)"/><rect x="552.62" y="283.5" width="1.4" height="126.30000000000001" fill="url(#gmi)"/><rect x="561.28" y="283.5" width="1.4" height="126.30000000000001" fill="url(#gmi)"/><rect x="569.94" y="283.5" width="1.4" height="126.30000000000001" fill="url(#gmi)"/><rect x="578.60" y="283.5" width="1.4" height="126.30000000000001" fill="url(#gma)"/><rect x="587.26" y="283.5" width="1.4" height="126.30000000000001" fill="url(#gmi)"/><rect x="595.92" y="283.5" width="1.4" height="126.30000000000001" fill="url(#gmi)"/><rect x="604.58" y="283.5" width="1.4" height="126.30000000000001" fill="url(#gmi)"/><rect x="613.24" y="283.5" width="1.4" height="126.30000000000001" fill="url(#gmi)"/><line x1="189.0" y1="315.07" x2="624.0" y2="315.07" stroke="#2e2e2e" stroke-width="1.4"/><line x1="189.0" y1="346.65" x2="624.0" y2="346.65" stroke="#2e2e2e" stroke-width="1.4"/><line x1="189.0" y1="378.23" x2="624.0" y2="378.23" stroke="#2e2e2e" stroke-width="1.4"/>
<path d="M189.6 410.3 V283.6 H623.5 V410.3" fill="none" stroke="#000" stroke-width="1.4"/>
<rect x="189.0" y="408.8" width="435.0" height="1.5" fill="#000"/>
<polygon points="189.6,409.8 189.6,390.9 190.6,390.9 190.6,403.5 191.6,403.5 191.6,403.5 192.6,403.5 192.6,384.5 193.6,384.5 193.6,403.5 194.6,403.5 194.6,403.5 195.6,403.5 195.6,403.5 196.6,403.5 196.6,397.2 197.6,397.2 197.6,397.2 198.6,397.2 198.6,397.2 199.6,397.2 199.6,403.5 200.6,403.5 200.6,403.5 201.6,403.5 201.6,397.2 202.6,397.2 202.6,397.2 203.6,397.2 203.6,403.5 204.6,403.5 204.6,403.5 205.6,403.5 205.6,403.5 206.6,403.5 206.6,397.2 207.6,397.2 207.6,403.5 208.6,403.5 208.6,397.2 209.6,397.2 209.6,397.2 210.6,397.2 210.6,397.2 211.6,397.2 211.6,397.2 212.6,397.2 212.6,397.2 213.6,397.2 213.6,397.2 214.6,397.2 214.6,403.5 215.6,403.5 215.6,403.5 216.6,403.5 216.6,397.2 217.6,397.2 217.6,397.2 218.6,397.2 218.6,397.2 219.6,397.2 219.6,403.5 220.6,403.5 220.6,397.2 221.6,397.2 221.6,397.2 222.6,397.2 222.6,403.5 223.6,403.5 223.6,403.5 224.6,403.5 224.6,403.5 225.6,403.5 225.6,390.9 226.6,390.9 226.6,403.5 227.6,403.5 227.6,397.2 228.6,397.2 228.6,397.2 229.6,397.2 229.6,397.2 230.6,397.2 230.6,403.5 231.6,403.5 231.6,397.2 232.6,397.2 232.6,403.5 233.6,403.5 233.6,397.2 234.6,397.2 234.6,384.5 235.6,384.5 235.6,390.9 236.6,390.9 236.6,397.2 237.6,397.2 237.6,403.5 238.6,403.5 238.6,397.2 239.6,397.2 239.6,397.2 240.6,397.2 240.6,397.2 241.6,397.2 241.6,397.2 242.6,397.2 242.6,397.2 243.6,397.2 243.6,384.5 244.6,384.5 244.6,397.2 245.6,397.2 245.6,397.2 246.6,397.2 246.6,403.5 247.6,403.5 247.6,403.5 248.6,403.5 248.6,397.2 249.6,397.2 249.6,397.2 250.6,397.2 250.6,403.5 251.6,403.5 251.6,403.5 252.6,403.5 252.6,397.2 253.6,397.2 253.6,403.5 254.6,403.5 254.6,397.2 255.6,397.2 255.6,403.5 256.6,403.5 256.6,397.2 257.6,397.2 257.6,397.2 258.6,397.2 258.6,397.2 259.6,397.2 259.6,403.5 260.6,403.5 260.6,403.5 261.6,403.5 261.6,397.2 262.6,397.2 262.6,403.5 263.6,403.5 263.6,403.5 264.6,403.5 264.6,403.5 265.6,403.5 265.6,403.5 266.6,403.5 266.6,403.5 267.6,403.5 267.6,397.2 268.6,397.2 268.6,397.2 269.6,397.2 269.6,397.2 270.6,397.2 270.6,397.2 271.6,397.2 271.6,397.2 272.6,397.2 272.6,397.2 273.6,397.2 273.6,403.5 274.6,403.5 274.6,397.2 275.6,397.2 275.6,397.2 276.6,397.2 276.6,397.2 277.6,397.2 277.6,397.2 278.6,397.2 278.6,403.5 279.6,403.5 279.6,403.5 280.6,403.5 280.6,403.5 281.6,403.5 281.6,403.5 282.6,403.5 282.6,403.5 283.6,403.5 283.6,403.5 284.6,403.5 284.6,403.5 285.6,403.5 285.6,403.5 286.6,403.5 286.6,403.5 287.6,403.5 287.6,397.2 288.6,397.2 288.6,397.2 289.6,397.2 289.6,403.5 290.6,403.5 290.6,397.2 291.6,397.2 291.6,397.2 292.6,397.2 292.6,397.2 293.6,397.2 293.6,403.5 294.6,403.5 294.6,403.5 295.6,403.5 295.6,403.5 296.6,403.5 296.6,390.9 297.6,390.9 297.6,397.2 298.6,397.2 298.6,397.2 299.6,397.2 299.6,397.2 300.6,397.2 300.6,397.2 301.6,397.2 301.6,397.2 302.6,397.2 302.6,397.2 303.6,397.2 303.6,397.2 304.6,397.2 304.6,403.5 305.6,403.5 305.6,403.5 306.6,403.5 306.6,403.5 307.6,403.5 307.6,397.2 308.6,397.2 308.6,397.2 309.6,397.2 309.6,403.5 310.6,403.5 310.6,403.5 311.6,403.5 311.6,397.2 312.6,397.2 312.6,397.2 313.6,397.2 313.6,403.5 314.6,403.5 314.6,397.2 315.6,397.2 315.6,397.2 316.6,397.2 316.6,397.2 317.6,397.2 317.6,397.2 318.6,397.2 318.6,403.5 319.6,403.5 319.6,397.2 320.6,397.2 320.6,403.5 321.6,403.5 321.6,403.5 322.6,403.5 322.6,397.2 323.6,397.2 323.6,397.2 324.6,397.2 324.6,403.5 325.6,403.5 325.6,397.2 326.6,397.2 326.6,403.5 327.6,403.5 327.6,403.5 328.6,403.5 328.6,397.2 329.6,397.2 329.6,397.2 330.6,397.2 330.6,397.2 331.6,397.2 331.6,397.2 332.6,397.2 332.6,403.5 333.6,403.5 333.6,397.2 334.6,397.2 334.6,390.9 335.6,390.9 335.6,397.2 336.6,397.2 336.6,397.2 337.6,397.2 337.6,397.2 338.6,397.2 338.6,397.2 339.6,397.2 339.6,403.5 340.6,403.5 340.6,403.5 341.6,403.5 341.6,403.5 342.6,403.5 342.6,403.5 343.6,403.5 343.6,397.2 344.6,397.2 344.6,403.5 345.6,403.5 345.6,403.5 346.6,403.5 346.6,403.5 347.6,403.5 347.6,403.5 348.6,403.5 348.6,397.2 349.6,397.2 349.6,390.9 350.6,390.9 350.6,403.5 351.6,403.5 351.6,397.2 352.6,397.2 352.6,403.5 353.6,403.5 353.6,397.2 354.6,397.2 354.6,403.5 355.6,403.5 355.6,397.2 356.6,397.2 356.6,403.5 357.6,403.5 357.6,403.5 358.6,403.5 358.6,397.2 359.6,397.2 359.6,384.5 360.6,384.5 360.6,397.2 361.6,397.2 361.6,403.5 362.6,403.5 362.6,403.5 363.6,403.5 363.6,397.2 364.6,397.2 364.6,397.2 365.6,397.2 365.6,397.2 366.6,397.2 366.6,397.2 367.6,397.2 367.6,403.5 368.6,403.5 368.6,403.5 369.6,403.5 369.6,397.2 370.6,397.2 370.6,397.2 371.6,397.2 371.6,403.5 372.6,403.5 372.6,403.5 373.6,403.5 373.6,403.5 374.6,403.5 374.6,397.2 375.6,397.2 375.6,397.2 376.6,397.2 376.6,397.2 377.6,397.2 377.6,403.5 378.6,403.5 378.6,397.2 379.6,397.2 379.6,397.2 380.6,397.2 380.6,403.5 381.6,403.5 381.6,403.5 382.6,403.5 382.6,403.5 383.6,403.5 383.6,403.5 384.6,403.5 384.6,403.5 385.6,403.5 385.6,403.5 386.6,403.5 386.6,403.5 387.6,403.5 387.6,403.5 388.6,403.5 388.6,403.5 389.6,403.5 389.6,397.2 390.6,397.2 390.6,403.5 391.6,403.5 391.6,397.2 392.6,397.2 392.6,397.2 393.6,397.2 393.6,403.5 394.6,403.5 394.6,403.5 395.6,403.5 395.6,403.5 396.6,403.5 396.6,403.5 397.6,403.5 397.6,397.2 398.6,397.2 398.6,397.2 399.6,397.2 399.6,403.5 400.6,403.5 400.6,397.2 401.6,397.2 401.6,397.2 402.6,397.2 402.6,403.5 403.6,403.5 403.6,403.5 404.6,403.5 404.6,397.2 405.6,397.2 405.6,403.5 406.6,403.5 406.6,403.5 407.6,403.5 407.6,403.5 408.6,403.5 408.6,403.5 409.6,403.5 409.6,397.2 410.6,397.2 410.6,390.9 411.6,390.9 411.6,397.2 412.6,397.2 412.6,397.2 413.6,397.2 413.6,397.2 414.6,397.2 414.6,403.5 415.6,403.5 415.6,403.5 416.6,403.5 416.6,403.5 417.6,403.5 417.6,403.5 418.6,403.5 418.6,403.5 419.6,403.5 419.6,397.2 420.6,397.2 420.6,397.2 421.6,397.2 421.6,403.5 422.6,403.5 422.6,403.5 423.6,403.5 423.6,390.9 424.6,390.9 424.6,397.2 425.6,397.2 425.6,397.2 426.6,397.2 426.6,397.2 427.6,397.2 427.6,397.2 428.6,397.2 428.6,403.5 429.6,403.5 429.6,397.2 430.6,397.2 430.6,403.5 431.6,403.5 431.6,403.5 432.6,403.5 432.6,403.5 433.6,403.5 433.6,403.5 434.6,403.5 434.6,403.5 435.6,403.5 435.6,403.5 436.6,403.5 436.6,403.5 437.6,403.5 437.6,403.5 438.6,403.5 438.6,397.2 439.6,397.2 439.6,403.5 440.6,403.5 440.6,403.5 441.6,403.5 441.6,403.5 442.6,403.5 442.6,403.5 443.6,403.5 443.6,403.5 444.6,403.5 444.6,403.5 445.6,403.5 445.6,403.5 446.6,403.5 446.6,403.5 447.6,403.5 447.6,403.5 448.6,403.5 448.6,403.5 449.6,403.5 449.6,403.5 450.6,403.5 450.6,403.5 451.6,403.5 451.6,403.5 452.6,403.5 452.6,403.5 453.6,403.5 453.6,403.5 454.6,403.5 454.6,390.9 455.6,390.9 455.6,397.2 456.6,397.2 456.6,403.5 457.6,403.5 457.6,397.2 458.6,397.2 458.6,403.5 459.6,403.5 459.6,397.2 460.6,397.2 460.6,403.5 461.6,403.5 461.6,403.5 462.6,403.5 462.6,403.5 463.6,403.5 463.6,403.5 464.6,403.5 464.6,403.5 465.6,403.5 465.6,403.5 466.6,403.5 466.6,403.5 467.6,403.5 467.6,403.5 468.6,403.5 468.6,403.5 469.6,403.5 469.6,403.5 470.6,403.5 470.6,403.5 471.6,403.5 471.6,397.2 472.6,397.2 472.6,403.5 473.6,403.5 473.6,403.5 474.6,403.5 474.6,397.2 475.6,397.2 475.6,403.5 476.6,403.5 476.6,403.5 477.6,403.5 477.6,397.2 478.6,397.2 478.6,397.2 479.6,397.2 479.6,403.5 480.6,403.5 480.6,397.2 481.6,397.2 481.6,397.2 482.6,397.2 482.6,403.5 483.6,403.5 483.6,403.5 484.6,403.5 484.6,403.5 485.6,403.5 485.6,397.2 486.6,397.2 486.6,403.5 487.6,403.5 487.6,403.5 488.6,403.5 488.6,403.5 489.6,403.5 489.6,397.2 490.6,397.2 490.6,397.2 491.6,397.2 491.6,397.2 492.6,397.2 492.6,403.5 493.6,403.5 493.6,397.2 494.6,397.2 494.6,397.2 495.6,397.2 495.6,403.5 496.6,403.5 496.6,397.2 497.6,397.2 497.6,403.5 498.6,403.5 498.6,403.5 499.6,403.5 499.6,390.9 500.6,390.9 500.6,403.5 501.6,403.5 501.6,403.5 502.6,403.5 502.6,403.5 503.6,403.5 503.6,397.2 504.6,397.2 504.6,397.2 505.6,397.2 505.6,397.2 506.6,397.2 506.6,403.5 507.6,403.5 507.6,403.5 508.6,403.5 508.6,403.5 509.6,403.5 509.6,397.2 510.6,397.2 510.6,390.9 511.6,390.9 511.6,397.2 512.6,397.2 512.6,397.2 513.6,397.2 513.6,403.5 514.6,403.5 514.6,403.5 515.6,403.5 515.6,403.5 516.6,403.5 516.6,397.2 517.6,397.2 517.6,397.2 518.6,397.2 518.6,403.5 519.6,403.5 519.6,403.5 520.6,403.5 520.6,403.5 521.6,403.5 521.6,403.5 522.6,403.5 522.6,403.5 523.6,403.5 523.6,403.5 524.6,403.5 524.6,403.5 525.6,403.5 525.6,403.5 526.6,403.5 526.6,403.5 527.6,403.5 527.6,403.5 528.6,403.5 528.6,403.5 529.6,403.5 529.6,403.5 530.6,403.5 530.6,403.5 531.6,403.5 531.6,403.5 532.6,403.5 532.6,397.2 533.6,397.2 533.6,397.2 534.6,397.2 534.6,403.5 535.6,403.5 535.6,403.5 536.6,403.5 536.6,403.5 537.6,403.5 537.6,403.5 538.6,403.5 538.6,397.2 539.6,397.2 539.6,397.2 540.6,397.2 540.6,397.2 541.6,397.2 541.6,397.2 542.6,397.2 542.6,403.5 543.6,403.5 543.6,397.2 544.6,397.2 544.6,397.2 545.6,397.2 545.6,397.2 546.6,397.2 546.6,397.2 547.6,397.2 547.6,397.2 548.6,397.2 548.6,403.5 549.6,403.5 549.6,403.5 550.6,403.5 550.6,403.5 551.6,403.5 551.6,397.2 552.6,397.2 552.6,403.5 553.6,403.5 553.6,397.2 554.6,397.2 554.6,397.2 555.6,397.2 555.6,397.2 556.6,397.2 556.6,397.2 557.6,397.2 557.6,403.5 558.6,403.5 558.6,403.5 559.6,403.5 559.6,403.5 560.6,403.5 560.6,409.8" fill="#12d612"/><rect x="268.7" y="385" width="1.6" height="24.8" fill="#12d612"/><rect x="281.8" y="385" width="1.4" height="24.8" fill="#12d612"/><rect x="393.8" y="373" width="1.6" height="36.8" fill="#5fd000"/><rect x="521.8" y="334" width="1.2" height="75.8" fill="#b4c400"/><rect x="520.8" y="372" width="3.2" height="37.8" fill="#5fd000"/><rect x="207.3" y="392" width="1.4" height="17.8" fill="#12d612"/><rect x="214.9" y="385" width="1.2" height="24.8" fill="#12d612"/><polyline points="189.6,313.1 190.6,309.3 191.6,307.3 192.6,306.7 193.6,301.4 194.6,294.6 195.6,305.6 196.6,311.6 197.6,313.1 198.6,309.0 199.6,309.8 200.6,294.6 201.6,293.6 202.6,307.4 203.6,306.3 204.6,295.0 205.6,298.0 206.6,290.3 207.6,308.0 208.6,303.5 209.6,311.9 210.6,313.8 211.6,303.5 212.6,299.0 213.6,297.3 214.6,306.6 215.6,314.6 216.6,292.3 217.6,300.6 218.6,309.8 219.6,293.5 220.6,307.3 221.6,296.5 222.6,304.6 223.6,315.6 224.6,294.7 225.6,308.0 226.6,305.5 227.6,311.2 228.6,301.1 229.6,312.6 230.6,313.4 231.6,295.4 232.6,301.1 233.6,298.9 234.6,310.6 235.6,312.3 236.6,309.6 237.6,311.4 238.6,305.5 239.6,312.0 240.6,299.8 241.6,296.2 242.6,308.6 243.6,302.9 244.6,294.5 245.6,310.1 246.6,296.7 247.6,298.9 248.6,295.8 249.6,306.4 250.6,297.4 251.6,300.2 252.6,305.1 253.6,313.1 254.6,294.4 255.6,312.5 256.6,308.8 257.6,299.2 258.6,310.7 259.6,306.7 260.6,303.3 261.6,298.8 262.6,302.9 263.6,301.0 264.6,295.9 265.6,297.6 266.6,299.5 267.6,303.3 268.6,305.7 269.6,309.2 270.6,296.2 271.6,296.4 272.6,311.7 273.6,304.8 274.6,298.5 275.6,298.5 276.6,307.4 277.6,303.2 278.6,301.9 279.6,313.0 280.6,294.4 281.6,306.7 282.6,307.9 283.6,305.9 284.6,306.1 285.6,294.7 286.6,313.4 287.6,295.0 288.6,301.3 289.6,302.0 290.6,310.8 291.6,308.3 292.6,310.9 293.6,305.3 294.6,313.7 295.6,300.4 296.6,302.0 297.6,305.2 298.6,300.5 299.6,296.9 300.6,307.6 301.6,301.1 302.6,311.4 303.6,307.3 304.6,294.2 305.6,296.2 306.6,297.7 307.6,300.5 308.6,298.0 309.6,307.4 310.6,298.5 311.6,302.4 312.6,301.9 313.6,314.0 314.6,303.1 315.6,294.9 316.6,313.6 317.6,313.5 318.6,294.8 319.6,311.3 320.6,306.4 321.6,314.3 322.6,312.0 323.6,312.0 324.6,313.5 325.6,307.3 326.6,307.8 327.6,308.0 328.6,308.3 329.6,310.0 330.6,308.4 331.6,309.0 332.6,310.7 333.6,309.3 334.6,308.5 335.6,315.4 336.6,315.1 337.6,314.9 338.6,308.6 339.6,312.5 340.6,315.1 341.6,311.3 342.6,311.8 343.6,314.7 344.6,314.9 345.6,312.3 346.6,309.9 347.6,313.5 348.6,313.5 349.6,309.9 350.6,311.2 351.6,313.1 352.6,309.3 353.6,310.6 354.6,311.9 355.6,310.4 356.6,314.6 357.6,309.9 358.6,311.2 359.6,313.9 360.6,307.6 361.6,310.0 362.6,308.9 363.6,311.7 364.6,315.1 365.6,310.5 366.6,314.7 367.6,308.5 368.6,314.9 369.6,309.8 370.6,309.8 371.6,309.3 372.6,314.2 373.6,308.8 374.6,307.5 375.6,307.2 376.6,311.5 377.6,311.9 378.6,309.8 379.6,312.3 380.6,311.1 381.6,313.7 382.6,309.8 383.6,313.1 384.6,311.1 385.6,314.9 386.6,312.4 387.6,314.5 388.6,310.2 389.6,312.2 390.6,307.8 391.6,308.3 392.6,311.7 393.6,308.9 394.6,313.6 395.6,307.3 396.6,313.7 397.6,314.2 398.6,314.8 399.6,308.7 400.6,311.7 401.6,311.7 402.6,312.3 403.6,309.8 404.6,307.2 405.6,309.8 406.6,310.9 407.6,307.2 408.6,309.6 409.6,314.7 410.6,307.4 411.6,313.4 412.6,308.5 413.6,311.4 414.6,307.0 415.6,313.4 416.6,312.0 417.6,308.5 418.6,309.0 419.6,309.0 420.6,310.5 421.6,311.0 422.6,311.5 423.6,305.9 424.6,312.3 425.6,314.4 426.6,309.1 427.6,308.4 428.6,310.4 429.6,312.7 430.6,309.5 431.6,308.9 432.6,307.6 433.6,312.8 434.6,308.5 435.6,314.1 436.6,310.9 437.6,307.6 438.6,308.3 439.6,314.1 440.6,313.3 441.6,313.9 442.6,305.6 443.6,307.6 444.6,313.3 445.6,308.0 446.6,310.1 447.6,308.0 448.6,310.8 449.6,309.1 450.6,312.6 451.6,311.7 452.6,309.0 453.6,309.3 454.6,305.4 455.6,311.2 456.6,309.1 457.6,305.1 458.6,305.6 459.6,307.0 460.6,308.7 461.6,309.5 462.6,310.8 463.6,313.3 464.6,306.2 465.6,306.5 466.6,308.6 467.6,308.4 468.6,311.8 469.6,313.0 470.6,310.1 471.6,311.0 472.6,311.5 473.6,305.4 474.6,307.9 475.6,308.0 476.6,305.2 477.6,307.4 478.6,306.1 479.6,310.6 480.6,307.2 481.6,307.6 482.6,313.1 483.6,309.1 484.6,313.5 485.6,310.2 486.6,309.2 487.6,311.9 488.6,306.2 489.6,312.6 490.6,308.1 491.6,304.7 492.6,309.5 493.6,305.1 494.6,309.5 495.6,310.1 496.6,310.9 497.6,310.6 498.6,304.1 499.6,304.0 500.6,310.7 501.6,309.2 502.6,312.7 503.6,307.7 504.6,304.8 505.6,303.9 506.6,304.1 507.6,305.4 508.6,311.2 509.6,309.2 510.6,312.1 511.6,312.3 512.6,308.6 513.6,305.0 514.6,305.5 515.6,309.4 516.6,304.9 517.6,308.6 518.6,308.5 519.6,303.7 520.6,304.2 521.6,312.7 522.6,308.2 523.6,308.0 524.6,307.6 525.6,311.2 526.6,309.7 527.6,310.0 528.6,309.0 529.6,304.6 530.6,305.5 531.6,305.9 532.6,303.5 533.6,309.4 534.6,311.7 535.6,312.5 536.6,303.7 537.6,304.9 538.6,309.2 539.6,303.1 540.6,305.1 541.6,306.9 542.6,310.6 543.6,303.3 544.6,303.4 545.6,305.2 546.6,305.0 547.6,304.4 548.6,308.7 549.6,304.5 550.6,302.7 551.6,311.5 552.6,307.3 553.6,306.9 554.6,305.2 555.6,311.6 556.6,312.6 557.6,303.2 558.6,309.4 559.6,309.4" fill="none" stroke="#409494" stroke-width="1.0" stroke-linejoin="bevel"/>
<rect x="559.9" y="283.5" width="1.35" height="126.80000000000001" fill="#e81212"/>
</svg>
<div class="tk" style="left:185px;top:127px;width:4px"></div><div class="tk" style="left:185px;top:152px;width:4px"></div><div class="tk" style="left:185px;top:177px;width:4px"></div><div class="tk" style="left:185px;top:203px;width:4px"></div><div class="tk" style="left:185px;top:228px;width:4px"></div><div class="tk" style="left:624px;top:128px;width:3px"></div><div class="tk" style="left:624px;top:144px;width:3px"></div><div class="tk" style="left:624px;top:160px;width:3px"></div><div class="tk" style="left:624px;top:175px;width:3px"></div><div class="tk" style="left:624px;top:191px;width:3px"></div><div class="tk" style="left:624px;top:207px;width:3px"></div><div class="tk" style="left:624px;top:222px;width:3px"></div><div class="tk" style="left:624px;top:238px;width:3px"></div><div class="tk" style="left:185px;top:283px;width:4px"></div><div class="tk" style="left:185px;top:315px;width:4px"></div><div class="tk" style="left:185px;top:346px;width:4px"></div><div class="tk" style="left:185px;top:378px;width:4px"></div>

<!-- stats widgets -->
<div class="a" style="left:395px;top:430px;width:13px;height:13px;border:1px solid #333;background:#fff"></div>
<svg class="a" style="left:396px;top:431px" width="11" height="11" viewBox="0 0 11 11"><path d="M1.5 5.5 L4.2 8.2 L9.5 2.5" stroke="#000" stroke-width="1.1" fill="none"/></svg>
<div class="btn" style="left:575px;top:428px;width:75px;height:21px"></div>
<svg class="a" style="left:636px;top:436px" width="10" height="6" viewBox="0 0 10 6"><path d="M1.3 1.1 L5 4.7 L8.7 1.1" stroke="#3c3c3c" stroke-width="1.25" fill="none"/></svg>
<div class="btn" style="left:576px;top:452px;width:73px;height:21px"></div>
<div class="btn" style="left:575px;top:479px;width:73px;height:21px"></div>

<!-- panel borders -->
<div class="a" style="left:158px;top:501px;width:502px;height:1px;background:#626262"></div>
<div class="a" style="left:659px;top:93px;width:1px;height:412px;background:#626262"></div>
<div class="a" style="left:156px;top:504px;width:504px;height:1px;background:#626262"></div>

<!-- status bar -->
<div class="a" style="left:1px;top:505px;width:659px;height:18px;background:#f0f0f0"></div>
<div class="a" style="left:1px;top:505px;width:155px;height:1px;background:#e0e0e0"></div>
<div class="a" style="left:141px;top:507px;width:1px;height:16px;background:#d7d7d7"></div>
<div class="a" style="left:146px;top:508px;width:303px;height:13px;background:#e6e6e6;border:1px solid #d8d0d8"></div>
<div class="a" style="left:147px;top:509px;width:301px;height:11px;background:#06b025"></div>
<div class="a" style="left:450px;top:507px;width:1px;height:16px;background:#d7d7d7"></div>
<div class="a" style="left:508px;top:507px;width:1px;height:16px;background:#d7d7d7"></div>
<div class="a" style="left:630px;top:507px;width:1px;height:16px;background:#d7d7d7"></div>
<svg class="a" style="left:649px;top:512px" width="10" height="10" viewBox="0 0 10 10" fill="#b0b0b0"><rect x="7" y="1" width="2" height="2"/><rect x="4" y="4" width="2" height="2"/><rect x="7" y="4" width="2" height="2"/><rect x="1" y="7" width="2" height="2"/><rect x="4" y="7" width="2" height="2"/><rect x="7" y="7" width="2" height="2"/></svg>

<div class="t" style="left:29.85px;top:8px;font-size:12px;color:#000;letter-spacing:-0.086px">Opti Drive Control 1.70</div>
<div class="t" style="left:7.47px;top:33px;font-size:11.5px;color:#000;letter-spacing:0.047px">File</div>
<div class="t" style="left:39.50px;top:33px;font-size:11.5px;color:#000;letter-spacing:0.035px">Start test</div>
<div class="t" style="left:99.67px;top:33px;font-size:11.5px;color:#000;letter-spacing:-0.413px">Extra</div>
<div class="t" style="left:139.37px;top:33px;font-size:11.5px;color:#000;letter-spacing:-0.620px">Help</div>
<div class="t" style="left:8.67px;top:65px;font-size:11.5px;font-weight:bold;color:#000;letter-spacing:-0.303px">Drive</div>
<div class="t" style="left:83.79px;top:65px;font-size:11.5px;color:#000;letter-spacing:-0.847px">(F:)</div>
<div class="t" style="left:107.30px;top:65px;font-size:11.5px;color:#000;letter-spacing:-0.596px">SONY BD RW BWU-500S 2.63</div>
<div class="t" style="left:372.50px;top:65px;font-size:11.5px;font-weight:bold;color:#000;letter-spacing:-0.419px">Speed</div>
<div class="t" style="left:421.69px;top:65px;font-size:11.5px;color:#000;letter-spacing:-0.442px">8.0 X</div>
<div class="t" style="left:8.57px;top:97px;font-size:11.5px;font-weight:bold;color:#000;letter-spacing:-1.002px">Disc</div>
<div class="t" style="left:8.61px;top:123px;font-size:11.5px;color:#000;letter-spacing:-0.605px">Type</div>
<div class="t" style="left:125.77px;top:123px;font-size:11.5px;color:#078007;letter-spacing:-0.679px">BD-R</div>
<div class="t" style="left:8.37px;top:139px;font-size:11.5px;color:#000;letter-spacing:0.059px">MID</div>
<div class="t" style="left:77.37px;top:139px;font-size:11.5px;color:#078007;letter-spacing:-0.892px">RITEKBR2 (000)</div>
<div class="t" style="left:8.37px;top:156px;font-size:11.5px;color:#000;letter-spacing:0.284px">Length</div>
<div class="t" style="left:106.63px;top:156px;font-size:11.5px;color:#078007;letter-spacing:-0.505px">21.46 GB</div>
<div class="t" style="left:8.63px;top:172px;font-size:11.5px;color:#000;letter-spacing:0.150px">Contents</div>
<div class="t" style="left:128.29px;top:172px;font-size:11.5px;color:#078007;letter-spacing:-0.011px">data</div>
<div class="t" style="left:8.37px;top:191px;font-size:11.5px;color:#000;letter-spacing:-0.055px">Label</div>
<div class="t" style="left:47.83px;top:191px;font-size:11.5px;color:#000;letter-spacing:-0.670px">24_10_2025</div>
<div class="t" style="left:31.54px;top:222px;font-size:12px;color:#989898;letter-spacing:-0.798px">Transfer rate</div>
<div class="t" style="left:30.10px;top:250px;font-size:12px;color:#989898;letter-spacing:-0.652px">Create test disc</div>
<div class="t" style="left:31.55px;top:278px;font-size:12px;color:#989898;letter-spacing:-0.675px">Verify test disc</div>
<div class="t" style="left:30.63px;top:306px;font-size:12px;color:#989898;letter-spacing:-0.661px">Drive info</div>
<div class="t" style="left:30.63px;top:334px;font-size:12px;color:#989898;letter-spacing:-0.718px">Disc info</div>
<div class="t" style="left:30.63px;top:362px;font-size:12px;color:#fff;letter-spacing:-0.698px">Disc quality</div>
<div class="t" style="left:29.90px;top:390px;font-size:12px;color:#989898;letter-spacing:-0.897px">CD Bler</div>
<div class="t" style="left:30.63px;top:418px;font-size:12px;color:#989898;letter-spacing:-0.386px">FE / TE</div>
<div class="t" style="left:30.63px;top:446px;font-size:12px;color:#989898;letter-spacing:-0.784px">Extra tests</div>
<div class="t" style="left:29.80px;top:486px;font-size:11.5px;color:#000;letter-spacing:0.264px">Status window &gt;&gt;</div>
<div class="t" style="left:4.11px;top:506px;font-size:11.5px;color:#000;letter-spacing:-0.457px">Test completed</div>
<div class="t" style="left:453.66px;top:507px;font-size:11.5px;color:#000;letter-spacing:-0.717px">100.0%</div>
<div class="t" style="left:601.39px;top:507px;font-size:11.5px;color:#000;letter-spacing:-0.423px">30:25</div>
<div class="t" style="left:190.57px;top:95px;font-size:14px;font-weight:bold;color:#fff;letter-spacing:0.261px">Disc quality</div>
<div class="t" style="left:199.30px;top:113px;font-size:11px;color:#000;letter-spacing:-0.102px">LDC</div>
<div class="t" style="left:231.80px;top:113px;font-size:11px;color:#000;letter-spacing:-0.147px">Read speed</div>
<div class="t" style="left:302.65px;top:113px;font-size:11px;color:#000;letter-spacing:-0.068px">Write speed</div>
<div class="t" style="left:199.50px;top:269px;font-size:11px;color:#000;letter-spacing:-0.470px">BIS</div>
<div class="t" style="left:228.44px;top:269px;font-size:11px;color:#000;letter-spacing:-0.254px">Jitter</div>
<div class="t" style="left:251.87px;top:428px;font-size:11.5px;color:#000;letter-spacing:-1.027px">LDC</div>
<div class="t" style="left:310.97px;top:428px;font-size:11.5px;color:#000;letter-spacing:-1.445px">BIS</div>
<div class="t" style="left:163.45px;top:444px;font-size:11.5px;color:#000;letter-spacing:-0.639px">Avg</div>
<div class="t" style="left:252.36px;top:444px;font-size:11.5px;color:#078007;letter-spacing:-0.505px">1.94</div>
<div class="t" style="left:306.30px;top:444px;font-size:11.5px;color:#078007;letter-spacing:-0.518px">0.04</div>
<div class="t" style="left:162.57px;top:461px;font-size:11.5px;color:#000;letter-spacing:-0.102px">Max</div>
<div class="t" style="left:255.44px;top:461px;font-size:11.5px;color:#078007;letter-spacing:-1.080px">491</div>
<div class="t" style="left:315.26px;top:461px;font-size:11.5px;color:#078007;letter-spacing:-0.805px">12</div>
<div class="t" style="left:161.41px;top:477px;font-size:11.5px;color:#000;letter-spacing:-0.084px">Total</div>
<div class="t" style="left:236.33px;top:477px;font-size:11.5px;color:#078007;letter-spacing:-0.423px">682377</div>
<div class="t" style="left:296.76px;top:477px;font-size:11.5px;color:#078007;letter-spacing:-0.305px">13079</div>
<div class="t" style="left:416.82px;top:428px;font-size:11.5px;color:#000;letter-spacing:0.112px">Jitter</div>
<div class="t" style="left:417.59px;top:445px;font-size:11.5px;color:#078007;letter-spacing:-0.624px">8.0%</div>
<div class="t" style="left:417.53px;top:461px;font-size:11.5px;color:#078007;letter-spacing:-0.605px">9.8%</div>
<div class="t" style="left:460.70px;top:433px;font-size:11.5px;color:#000;letter-spacing:-0.227px">Speed</div>
<div class="t" style="left:520.34px;top:433px;font-size:11.5px;color:#078007;letter-spacing:-0.674px">4.05 X</div>
<div class="t" style="left:460.57px;top:461px;font-size:11.5px;color:#000;letter-spacing:0.242px">Position</div>
<div class="t" style="left:519.73px;top:461px;font-size:11.5px;color:#078007;letter-spacing:-0.316px">21975 MB</div>
<div class="t" style="left:460.70px;top:477px;font-size:11.5px;color:#000;letter-spacing:-0.418px">Samples</div>
<div class="t" style="left:519.69px;top:477px;font-size:11.5px;color:#078007;letter-spacing:-0.326px">348030</div>
<div class="t" style="left:578.94px;top:431px;font-size:11.5px;color:#000;letter-spacing:-0.555px">4.0 X</div>
<div class="t" style="left:589.50px;top:455px;font-size:11.5px;color:#000;letter-spacing:0.231px">Start full</div>
<div class="t" style="left:586.80px;top:482px;font-size:11.5px;color:#000;letter-spacing:0.132px">Start part</div>
<div class="t" style="left:602.06px;top:252px;font-size:11px;color:#000;letter-spacing:-0.288px">25.0 GB</div>
<div class="t" style="left:602.06px;top:408px;font-size:11px;color:#000;letter-spacing:-0.288px">25.0 GB</div>
<div class="t" style="left:167.87px;top:119px;font-size:11px">500</div>
<div class="t" style="left:167.87px;top:144px;font-size:11px">400</div>
<div class="t" style="left:167.87px;top:170px;font-size:11px">300</div>
<div class="t" style="left:167.87px;top:195px;font-size:11px">200</div>
<div class="t" style="left:167.87px;top:220px;font-size:11px">100</div>
<div class="t" style="left:625.69px;top:120px;font-size:11px">8 X</div>
<div class="t" style="left:625.56px;top:136px;font-size:11px">7 X</div>
<div class="t" style="left:625.63px;top:152px;font-size:11px">6 X</div>
<div class="t" style="left:625.59px;top:167px;font-size:11px">5 X</div>
<div class="t" style="left:626.24px;top:183px;font-size:11px">4 X</div>
<div class="t" style="left:625.59px;top:199px;font-size:11px">3 X</div>
<div class="t" style="left:625.66px;top:215px;font-size:11px">2 X</div>
<div class="t" style="left:625.37px;top:230px;font-size:11px">1 X</div>
<div class="t" style="left:173.97px;top:275px;font-size:11px">20</div>
<div class="t" style="left:173.97px;top:307px;font-size:11px">15</div>
<div class="t" style="left:173.97px;top:338px;font-size:11px">10</div>
<div class="t" style="left:179.97px;top:370px;font-size:11px">5</div>
<div class="t" style="left:625.37px;top:276px;font-size:11px">10%</div>
<div class="t" style="left:625.69px;top:301px;font-size:11px">8%</div>
<div class="t" style="left:625.63px;top:327px;font-size:11px">6%</div>
<div class="t" style="left:626.24px;top:352px;font-size:11px">4%</div>
<div class="t" style="left:625.66px;top:377px;font-size:11px">2%</div>
<div class="t" style="left:182.24px;top:252px;font-size:11px">0.0</div>
<div class="t" style="left:224.77px;top:252px;font-size:11px">2.5</div>
<div class="t" style="left:267.93px;top:252px;font-size:11px">5.0</div>
<div class="t" style="left:310.41px;top:252px;font-size:11px">7.5</div>
<div class="t" style="left:350.82px;top:252px;font-size:11px">10.0</div>
<div class="t" style="left:394.92px;top:252px;font-size:11px">12.5</div>
<div class="t" style="left:437.62px;top:252px;font-size:11px">15.0</div>
<div class="t" style="left:480.82px;top:252px;font-size:11px">17.5</div>
<div class="t" style="left:523.27px;top:252px;font-size:11px">20.0</div>
<div class="t" style="left:566.67px;top:252px;font-size:11px">22.5</div>
<div class="t" style="left:182.24px;top:408px;font-size:11px">0.0</div>
<div class="t" style="left:224.77px;top:408px;font-size:11px">2.5</div>
<div class="t" style="left:267.93px;top:408px;font-size:11px">5.0</div>
<div class="t" style="left:310.41px;top:408px;font-size:11px">7.5</div>
<div class="t" style="left:350.82px;top:408px;font-size:11px">10.0</div>
<div class="t" style="left:394.92px;top:408px;font-size:11px">12.5</div>
<div class="t" style="left:437.62px;top:408px;font-size:11px">15.0</div>
<div class="t" style="left:480.82px;top:408px;font-size:11px">17.5</div>
<div class="t" style="left:523.27px;top:408px;font-size:11px">20.0</div>
<div class="t" style="left:566.67px;top:408px;font-size:11px">22.5</div>


<!-- mouse cursor -->
<svg class="a" style="left:640px;top:248px;z-index:60" width="15" height="22" viewBox="0 0 15 22"><path d="M1.5 1.6 L1.5 17.4 L5.2 14 L7.9 20 L10.3 19 L7.6 12.5 L12.4 12.5Z" fill="#fff" stroke="#000" stroke-width="1" stroke-linejoin="miter"/></svg>
</body></html>
